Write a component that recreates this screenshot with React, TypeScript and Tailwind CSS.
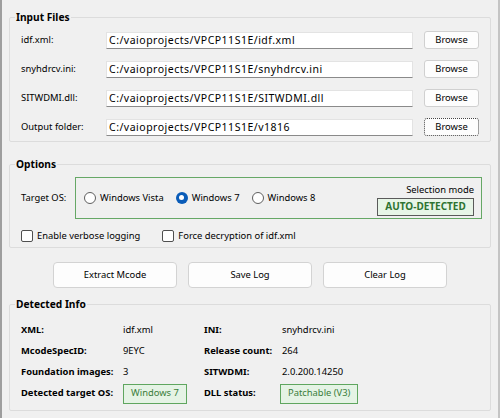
import React from 'react';

const files = [
  { label: 'idf.xml:', value: 'C:/vaioprojects/VPCP11S1E/idf.xml' },
  { label: 'snyhdrcv.ini:', value: 'C:/vaioprojects/VPCP11S1E/snyhdrcv.ini' },
  { label: 'SITWDMI.dll:', value: 'C:/vaioprojects/VPCP11S1E/SITWDMI.dll' },
  { label: 'Output folder:', value: 'C:/vaioprojects/VPCP11S1E/v1816', focused: true },
];

const Group = ({ title, className = '', children }: { title: string; className?: string; children: React.ReactNode }) => (
  <fieldset className={`border border-[#dcdcdc] rounded-[2px] ${className}`}>
    <legend className="ml-[5px] px-[1px] h-[18px] leading-[18px] text-[10.2px] font-bold text-black">{title}</legend>
    {children}
  </fieldset>
);

const Radio = ({ label, checked }: { label: string; checked?: boolean }) => (
  <label className="flex items-center gap-[4px]">
    {checked ? (
      <span className="w-[12px] h-[12px] rounded-full bg-[#0a5cb8] flex items-center justify-center">
        <span className="w-[5px] h-[5px] rounded-full bg-white" />
      </span>
    ) : (
      <span className="w-[12px] h-[12px] rounded-full border border-[#5f5f5f] bg-white" />
    )}
    <span>{label}</span>
  </label>
);

const Check = ({ label }: { label: string }) => (
  <label className="flex items-center gap-[4px]">
    <span className="w-[12px] h-[12px] rounded-[2px] border border-[#4f4f4f] bg-white" />
    <span>{label}</span>
  </label>
);

const Badge = ({ children }: { children: React.ReactNode }) => (
  <span className="inline-flex items-center h-[20px] px-[7px] bg-[#e5f3e5] border border-[#5fa65f] text-[#3a7d3a]">
    {children}
  </span>
);

export default function App() {
  return (
    <div className="w-[500px] h-[418px] bg-[#f0f0f0] border-l-2 border-r-2 border-l-[#9e9e9e] border-r-[#c4c4c4] px-[7px] pt-[8px] font-['Noto_Sans',sans-serif] text-[9.4px] text-black whitespace-nowrap overflow-hidden">
      {/* file inputs */}
      <Group title="Input Files">
        <div className="pl-[11px] pt-[5px] pb-[5px] flex flex-col gap-[11px]">
          {files.map((f) => (
            <div key={f.label} className="flex items-center h-[18px]">
              <span className="w-[85px]">{f.label}</span>
              <div className="w-[307px] h-[17px] bg-white border border-[#e3e3e3] border-b-[#8a8a8a] pl-[2px] leading-[15px] text-[10.5px] tracking-[0.5px]">
                {f.value}
              </div>
              <button
                className={`ml-[11px] w-[55px] h-[18px] rounded-[3px] bg-[#fdfdfd] border leading-[16px] ${
                  f.focused ? 'border-dotted border-[#444]' : 'border-[#d0d0d0]'
                }`}
              >
                Browse
              </button>
            </div>
          ))}
        </div>
      </Group>

      <Group title="Options" className="mt-[13px]">
        <div className="pl-[11px] pr-[8px] pt-[4px] pb-[4px]">
          <div className="flex items-center">
            <span className="w-[54px]">Target OS:</span>
            <div className="flex-1 h-[42px] border border-[#66a866] flex items-center pl-[8px] pr-[7px]">
              <div className="flex items-center gap-[12px]">
                <Radio label="Windows Vista" />
                <Radio label="Windows 7" checked />
                <Radio label="Windows 8" />
              </div>
              <div className="ml-auto flex flex-col items-end pt-[1px]">
                <span className="leading-[16px]">Selection mode</span>
                <span className="w-[97px] h-[18px] flex items-center justify-center bg-[#e7f5e7] border border-[#5a5a5a] text-[#2e7331] font-bold text-[10px]">
                  AUTO-DETECTED
                </span>
              </div>
            </div>
          </div>
          <div className="flex items-center gap-[22px] mt-[10px] h-[14px]">
            <Check label="Enable verbose logging" />
            <Check label="Force decryption of idf.xml" />
          </div>
        </div>
      </Group>

      {/* actions */}
      <div className="flex justify-center gap-[11px] mt-[14px]">
        {['Extract Mcode', 'Save Log', 'Clear Log'].map((b) => (
          <button key={b} className="w-[124px] h-[26px] rounded-[4px] bg-[#fdfdfd] border border-[#d3d3d3]">
            {b}
          </button>
        ))}
      </div>

      <Group title="Detected Info" className="mt-[7px]">
        <div className="pl-[11px] pt-[7px] pb-[6px] grid grid-cols-[102px_81px_78px_1fr] auto-rows-[21px] items-center">
          <span className="font-bold">XML:</span>
          <span>idf.xml</span>
          <span className="font-bold">INI:</span>
          <span>snyhdrcv.ini</span>

          <span className="font-bold">McodeSpecID:</span>
          <span>9EYC</span>
          <span className="font-bold">Release count:</span>
          <span>264</span>

          <span className="font-bold">Foundation images:</span>
          <span>3</span>
          <span className="font-bold">SITWDMI:</span>
          <span>2.0.200.14250</span>

          <span className="font-bold h-[24px] flex items-center">Detected target OS:</span>
          <span className="h-[24px] flex items-center"><Badge>Windows 7</Badge></span>
          <span className="font-bold h-[24px] flex items-center">DLL status:</span>
          <span className="h-[24px] flex items-center -ml-[2px]"><Badge>Patchable (V3)</Badge></span>
        </div>
      </Group>
    </div>
  );
}
